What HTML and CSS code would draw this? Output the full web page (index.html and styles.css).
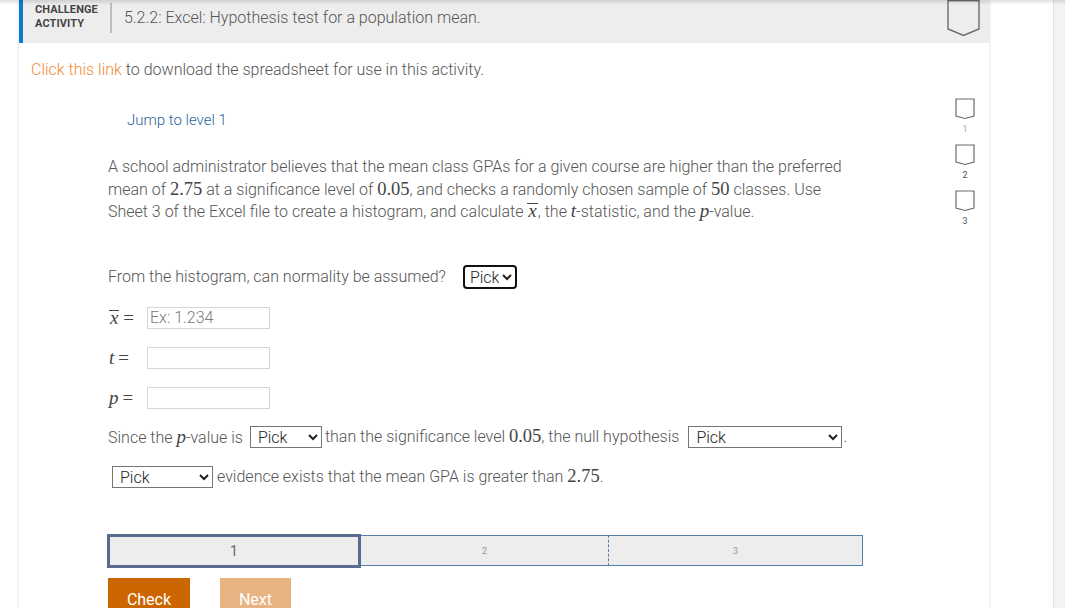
FILE: index.html
```html
<!DOCTYPE html>
<html lang="en">
<head>
<meta charset="utf-8">
<title>5.2.2: Excel: Hypothesis test for a population mean.</title>
<link rel="stylesheet" href="styles.css">
</head>
<body>
<div class="top-shadow"></div>
<div class="page">
  <div class="card">
    <header class="card-header">
      <div class="kind">CHALLENGE<br>ACTIVITY</div>
      <div class="divider"></div>
      <h1 class="title">5.2.2: Excel: Hypothesis test for a population mean.</h1>
      <svg class="bookmark" width="33" height="37" viewBox="0 0 33 37"><path d="M1 0 V29 L16.5 35.5 L32 29 V0" fill="none" stroke="#6b6b6b" stroke-width="1.4"/><path d="M1 0.7 H32" stroke="#6b6b6b" stroke-width="1.4"/></svg>
    </header>
    <div class="card-body">
      <p class="download"><span class="link">Click this link</span> to download the spreadsheet for use in this activity.</p>
      <div class="activity">
        <div class="question">
          <div class="jump">Jump to level 1</div>
          <p class="prompt">A school administrator believes that the mean class GPAs for a given course are higher than the preferred mean of <span class="num">2.75</span> at a significance level of <span class="num">0.05</span>, and checks a randomly chosen sample of <span class="num">50</span> classes. Use Sheet 3 of the Excel file to create a histogram, and calculate <span class="mi xbar">x</span>, the <span class="mi">t</span>-statistic, and the <span class="mi">p</span>-value.</p>
          <div class="row normal">
            <span>From the histogram, can normality be assumed?</span>
            <select class="pick focus"><option>Pick</option></select>
          </div>
          <div class="field">
            <span class="flabel"><span class="mi xbar">x</span> <span class="eq">=</span></span>
            <input class="box" type="text" placeholder="Ex: 1.234">
          </div>
          <div class="field">
            <span class="flabel"><span class="mi">t</span> <span class="eq">=</span></span>
            <input class="box" type="text">
          </div>
          <div class="field">
            <span class="flabel"><span class="mi">p</span> <span class="eq">=</span></span>
            <input class="box" type="text">
          </div>
          <div class="row since">
            <span>Since the <span class="mi">p</span>-value is</span>
            <select class="pick w72"><option>Pick</option></select>
            <span>than the significance level <span class="num">0.05</span>, the null hypothesis</span>
            <select class="pick w154"><option>Pick</option></select><span class="dot">.</span>
          </div>
          <div class="row evidence">
            <select class="pick w101"><option>Pick</option></select>
            <span>evidence exists that the mean GPA is greater than <span class="num">2.75</span>.</span>
          </div>
          <div class="progress">
            <div class="seg current">1</div>
            <div class="seg mid">2</div>
            <div class="seg last">3</div>
          </div>
          <div class="buttons">
            <button class="btn check">Check</button>
            <button class="btn next">Next</button>
          </div>
        </div>
        <div class="levels">
          <div class="level"><svg width="20" height="22" viewBox="0 0 20 22"><path d="M1 1 H19 V18 L10 20.5 L1 18 Z" fill="none" stroke="#6b6b6b" stroke-width="1.2"/></svg><span class="lnum first">1</span></div>
          <div class="level"><svg width="20" height="22" viewBox="0 0 20 22"><path d="M1 1 H19 V18 L10 20.5 L1 18 Z" fill="none" stroke="#6b6b6b" stroke-width="1.2"/></svg><span class="lnum">2</span></div>
          <div class="level"><svg width="20" height="22" viewBox="0 0 20 22"><path d="M1 1 H19 V18 L10 20.5 L1 18 Z" fill="none" stroke="#6b6b6b" stroke-width="1.2"/></svg><span class="lnum">3</span></div>
        </div>
      </div>
    </div>
  </div>
  <div class="spacer"></div>
  <div class="rightbar"></div>
</div>
</body>
</html>
```
FILE: styles.css
```css
* { box-sizing: border-box; }
html, body { margin: 0; padding: 0; }
body {
  background: #fff;
  font-family: Roboto, "Liberation Sans", sans-serif;
  font-size: 16px;
  font-weight: 300;
  color: #555;
  overflow: hidden;
}
.top-shadow {
  position: fixed;
  left: 0; top: 0; right: 0;
  height: 5px;
  background: linear-gradient(to bottom, rgba(0,0,0,0.12), rgba(0,0,0,0));
  pointer-events: none;
  z-index: 5;
}
.page {
  display: flex;
  height: 608px;
}
.card {
  margin-left: 19px;
  width: 970px;
  flex: none;
  background: #fff;
  box-shadow: 0 0 3px rgba(0,0,0,0.16);
}
.card-header {
  height: 43px;
  background: #ededed;
  border-left: 4px solid #0b7ccb;
  display: flex;
  align-items: flex-start;
  padding-left: 12px;
  padding-right: 9px;
}
.kind {
  font-size: 11px;
  font-weight: bold;
  line-height: 14px;
  color: #444;
  margin-top: 3px;
  letter-spacing: 0.1px;
}
.divider {
  width: 2px;
  height: 30px;
  background: #bdbdbd;
  margin: 3px 0 0 12px;
}
.title {
  font-size: 16px;
  font-weight: 300;
  color: #555;
  margin: 8px 0 0 12px;
  line-height: 20px;
  flex: 1;
}
.bookmark { display: block; margin-top: 0; }
.card-body { padding: 0 12px; }
.download {
  margin: 17px 0 0;
  line-height: 20px;
}
.link { color: #f08a36; }
.activity { display: flex; }
.question {
  margin-left: 77px;
  width: 755px;
}
.jump {
  margin: 30px 0 0 19px;
  line-height: 20px;
  font-size: 15px;
  color: #2d5f9e;
}
.prompt {
  margin: 26px 0 0;
  line-height: 22.5px;
}
.num {
  font-family: "Liberation Serif", "DejaVu Serif", serif;
  font-size: 18.5px;
  font-weight: normal;
  line-height: 1;
  color: #444;
}
.mi {
  font-family: "Liberation Serif", "DejaVu Serif", serif;
  font-style: italic;
  font-weight: normal;
  font-size: 19px;
  line-height: 1;
  color: #444;
}
.xbar {
  display: inline-block;
  border-top: 1px solid #444;
  line-height: 13px;
  padding: 0 1px;
}
.eq {
  font-family: "Liberation Serif", "DejaVu Serif", serif;
  font-size: 19px;
  font-weight: normal;
  line-height: 1;
  color: #444;
}
.row {
  display: flex;
  align-items: center;
  white-space: nowrap;
}
.normal { margin-top: 41px; height: 24px; }
.normal .pick { margin-left: 17px; }
select.pick {
  font-family: Roboto, "Liberation Sans", sans-serif;
  font-size: 16px;
  font-weight: 300;
  color: #222;
  height: 22px;
  border: 1px solid #767676;
  border-radius: 0;
  background: #fff;
  padding: 0 0 0 3px;
}
select.focus {
  width: 54px;
  height: 24px;
  border: 2px solid #111;
  border-radius: 4px;
  padding-left: 1px;
}
.w72 { width: 72px; margin: 0 3px 0 7px; }
.w154 { width: 154px; margin-left: 9px; }
.w101 { width: 101px; margin: 0 4px 0 4px; }
.dot { margin-left: 1px; }
.field {
  display: flex;
  align-items: center;
  height: 22px;
  margin-top: 18px;
}
.flabel {
  width: 39px;
  flex: none;
  padding-left: 1px;
  white-space: nowrap;
}
input.box {
  width: 123px;
  height: 22px;
  border: 1px solid #cfd8de;
  font-family: Roboto, "Liberation Sans", sans-serif;
  font-size: 16px;
  font-weight: 300;
  padding: 0 0 0 2px;
  color: #333;
}
input.box::placeholder { color: #7a7a7a; }
.since { margin-top: 17px; height: 22px; }
.evidence { margin-top: 18px; height: 22px; }
.progress {
  margin: 46px 0 0 -1px;
  display: flex;
  align-items: center;
  width: 756px;
  height: 34px;
}
.seg {
  height: 31px;
  background: #ededed;
  display: flex;
  align-items: center;
  justify-content: center;
  font-size: 9px;
  font-weight: 400;
  color: #999;
  border-top: 1px solid #5b7ea8;
  border-bottom: 1px solid #5b7ea8;
}
.seg.current {
  width: 254px;
  height: 34px;
  border: 3px solid #586d8e;
  font-size: 14px;
  color: #666;
}
.seg.mid {
  width: 248px;
  border-right: 1px dashed #5b7ea8;
}
.seg.last {
  width: 254px;
  border-right: 1px solid #5b7ea8;
}
.buttons {
  display: flex;
  gap: 30px;
  margin-top: 10px;
}
.btn {
  border: none;
  height: 40px;
  padding: 3px 0 0;
  font-family: Roboto, "Liberation Sans", sans-serif;
  font-size: 16px;
  font-weight: 400;
  color: #fff;
}
.check { width: 82px; background: #cc6600; }
.next { width: 71px; background: #e8b382; }
.levels {
  margin-left: 92px;
  padding-top: 18px;
  display: flex;
  flex-direction: column;
  align-items: center;
  width: 20px;
}
.level {
  display: flex;
  flex-direction: column;
  align-items: center;
  height: 46px;
}
.level svg { display: block; }
.lnum {
  font-size: 9px;
  font-weight: 400;
  line-height: 12px;
  margin-top: 3px;
  color: #555;
}
.lnum.first { color: #8fb0d8; }
.spacer { flex: 1; }
.rightbar {
  width: 12px;
  background: #f3f3f3;
  border-left: 1px solid #e4e4e4;
}
```
